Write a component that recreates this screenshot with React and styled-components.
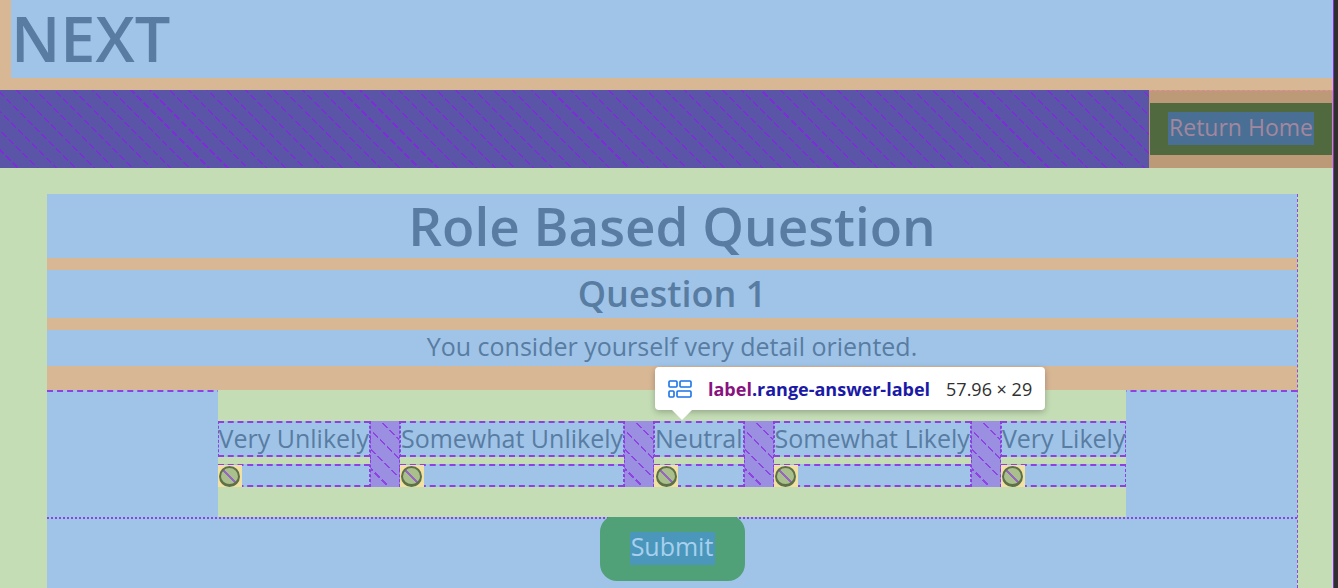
import React from 'react';
import styled, { createGlobalStyle, css } from 'styled-components';

const blue = '#a0c4e8';
const tan = '#d8b795';
const green = '#c4ddb5';
const ink = '#587ca2';
const purple = 'rgba(138, 43, 226, 0.85)';

const GlobalStyle = createGlobalStyle`
  html, body {
    margin: 0;
    padding: 0;
    background: ${green};
    overflow: hidden;
  }
  body {
    font-family: 'Open Sans', 'DejaVu Sans', sans-serif;
  }
`;

const hatch = (base, line) => css`
  background-color: ${base};
  background-image:
    repeating-linear-gradient(-45deg, transparent 0 7px, ${base} 7px 10px),
    repeating-linear-gradient(45deg, transparent 0 12px, ${line} 12px 13.5px);
`;

const Shell = styled.div`
  display: flex;
  width: 1338px;
  height: 588px;
  overflow: hidden;
`;

const Page = styled.div`
  flex: 1;
  display: flex;
  flex-direction: column;
  min-width: 0;
`;

const Edge = styled.div`
  width: 4px;
  background: #2f2f2f;
  border-left: 1px solid #8a2be2;
`;

const Header = styled.header`
  background: ${tan};
  padding: 0 0 12px 11px;
`;

const Logo = styled.h1`
  margin: 0;
  height: 78px;
  background: ${blue};
  color: ${ink};
  font-size: 63px;
  font-weight: 600;
  line-height: 76px;
`;

const Nav = styled.nav`
  display: flex;
  height: 78px;
`;

const NavFill = styled.div`
  flex: 1;
  ${hatch('#5a55a6', 'rgba(130, 40, 220, 0.9)')}
`;

const NavSlot = styled.div`
  width: 184px;
  background: #bc9a78;
  border-top: 1px dashed #e88aa0;
  box-sizing: border-box;
  padding: 12px 1px 13px;
  display: flex;
`;

const HomeButton = styled.button`
  flex: 1;
  border: none;
  margin: 0;
  background: #50693f;
  padding: 9px 18px 10px;
  display: flex;
  cursor: pointer;
`;

const ButtonText = styled.span`
  flex: 1;
  height: 33px;
  background: ${p => p.$bg};
  color: ${p => p.$color};
  font-family: 'Open Sans', sans-serif;
  font-size: ${p => p.$size}px;
  line-height: ${p => p.$lh}px;
  text-align: center;
  white-space: nowrap;
`;

const Main = styled.main`
  flex: 1;
  background: ${green};
  padding: 26px 35px 0 47px;
`;

const Card = styled.section`
  height: 100%;
  border-right: 1px dashed ${purple};
  display: flex;
  flex-direction: column;
`;

const Band = styled.div`
  background: ${blue};
  color: ${ink};
  text-align: center;
  height: ${p => p.$h}px;
  font-size: ${p => p.$size}px;
  font-weight: ${p => p.$weight || 400};
  line-height: ${p => p.$lh}px;
  border-bottom: ${p => p.$margin}px solid ${tan};
  white-space: nowrap;
`;

const RangeArea = styled.div`
  position: relative;
  background: ${blue};
  border-top: 2px dashed ${purple};
  display: flex;
  justify-content: center;
`;

const RangeGroup = styled.div`
  background: ${green};
  margin-top: -2px;
  padding: 31px 0 30px;
  display: flex;
`;

const Choice = styled.div`
  display: flex;
  flex-direction: column;
  gap: 7px;
`;

const ChoiceLabel = styled.label`
  box-sizing: border-box;
  height: 36px;
  background: ${blue};
  border: 2px dashed ${purple};
  border-left-width: 1px;
  border-right-width: 1px;
  color: ${ink};
  font-size: 25px;
  line-height: 30px;
  white-space: nowrap;
`;

const RadioRow = styled.div`
  box-sizing: border-box;
  height: 23px;
  background: ${blue};
  border: 2px dashed ${purple};
  border-left-width: 1px;
  border-right-width: 1px;
  display: flex;
`;

const RadioBox = styled.span`
  width: 24px;
  margin: -1px 0 -2px -1px;
  background: #f1e1a3;
  display: flex;
  align-items: center;
  justify-content: center;
`;

const RadioDot = styled.span`
  box-sizing: border-box;
  width: 21px;
  height: 21px;
  border-radius: 50%;
  border: 2px solid #5d7047;
  border-bottom-width: 3px;
  background:
    linear-gradient(45deg, transparent 0 45%, rgba(138, 43, 226, 0.6) 45% 53%, transparent 53%),
    #a9c08d;
`;

const GapStrip = styled.div`
  width: 30px;
  box-sizing: border-box;
  border-left: 1px dashed ${purple};
  border-right: 1px dashed ${purple};
  ${hatch('#9a8fe0', 'rgba(138, 43, 226, 0.75)')}
`;

const Tooltip = styled.div`
  position: absolute;
  left: 608px;
  top: -25px;
  height: 43px;
  padding: 0 13px;
  background: #fff;
  border-radius: 4px;
  box-shadow: 0 2px 6px rgba(0, 0, 0, 0.25);
  display: flex;
  align-items: center;
  font-family: 'Open Sans', 'Noto Sans', sans-serif;
  font-size: 18px;
  white-space: nowrap;

  &::after {
    content: '';
    position: absolute;
    left: 17px;
    bottom: -10px;
    border-left: 10px solid transparent;
    border-right: 10px solid transparent;
    border-top: 10px solid #fff;
  }
`;

const TipTag = styled.span`
  margin-left: 15px;
  font-weight: 700;
  color: #881280;
`;

const TipClass = styled.span`
  font-weight: 700;
  color: #1a1aa6;
`;

const TipSize = styled.span`
  margin-left: 16px;
  color: #303030;
  font-size: 18px;
`;

const SubmitArea = styled.div`
  flex: 1;
  background: ${blue};
  border-top: 2px dotted ${purple};
  display: flex;
  justify-content: center;
  align-items: flex-start;
`;

const SubmitButton = styled.button`
  margin-top: -4px;
  width: 145px;
  height: 66px;
  border: none;
  border-radius: 17px;
  background: #50a078;
  padding: 17px 30px 14px;
  display: flex;
  cursor: pointer;
`;

const choices = ['Very Unlikely', 'Somewhat Unlikely', 'Neutral', 'Somewhat Likely', 'Very Likely'];

const LayoutIcon = () => (
  <svg width="25" height="20" viewBox="0 0 25 20" fill="none" stroke="#1a73e8" strokeWidth="1.6">
    <rect x="1" y="2" width="8" height="6" rx="1" />
    <rect x="12" y="2" width="11" height="6" rx="1" />
    <rect x="1" y="12" width="5" height="6" rx="1" />
    <rect x="9" y="12" width="14" height="6" rx="1" />
  </svg>
);

const App = () => (
  <>
    <GlobalStyle />
    <Shell>
      <Page>
        <Header>
          <Logo>NEXT</Logo>
        </Header>
        <Nav>
          <NavFill />
          <NavSlot>
            <HomeButton>
              <ButtonText $bg="#4a6f94" $color="#a3879f" $size={23} $lh={30}>
                Return Home
              </ButtonText>
            </HomeButton>
          </NavSlot>
        </Nav>
        <Main>
          <Card>
            <Band $h={64} $size={53} $weight={600} $lh={64} $margin={12}>
              Role Based Question
            </Band>
            <Band $h={48} $size={36} $weight={600} $lh={48} $margin={12}>
              Question 1
            </Band>
            <Band $h={36} $size={25} $lh={33} $margin={24}>
              You consider yourself very detail oriented.
            </Band>
            <RangeArea>
              <RangeGroup>
                {choices.map((c, i) => (
                  <React.Fragment key={c}>
                    {i > 0 && <GapStrip />}
                    <Choice>
                      <ChoiceLabel>{c}</ChoiceLabel>
                      <RadioRow>
                        <RadioBox>
                          <RadioDot />
                        </RadioBox>
                      </RadioRow>
                    </Choice>
                  </React.Fragment>
                ))}
              </RangeGroup>
              <Tooltip>
                <LayoutIcon />
                <TipTag>label</TipTag>
                <TipClass>.range-answer-label</TipClass>
                <TipSize>57.96 × 29</TipSize>
              </Tooltip>
            </RangeArea>
            <SubmitArea>
              <SubmitButton>
                <ButtonText $bg="#4a97bb" $color="#a8d0ee" $size={25} $lh={29}>
                  Submit
                </ButtonText>
              </SubmitButton>
            </SubmitArea>
          </Card>
        </Main>
      </Page>
      <Edge />
    </Shell>
  </>
);

export default App;
